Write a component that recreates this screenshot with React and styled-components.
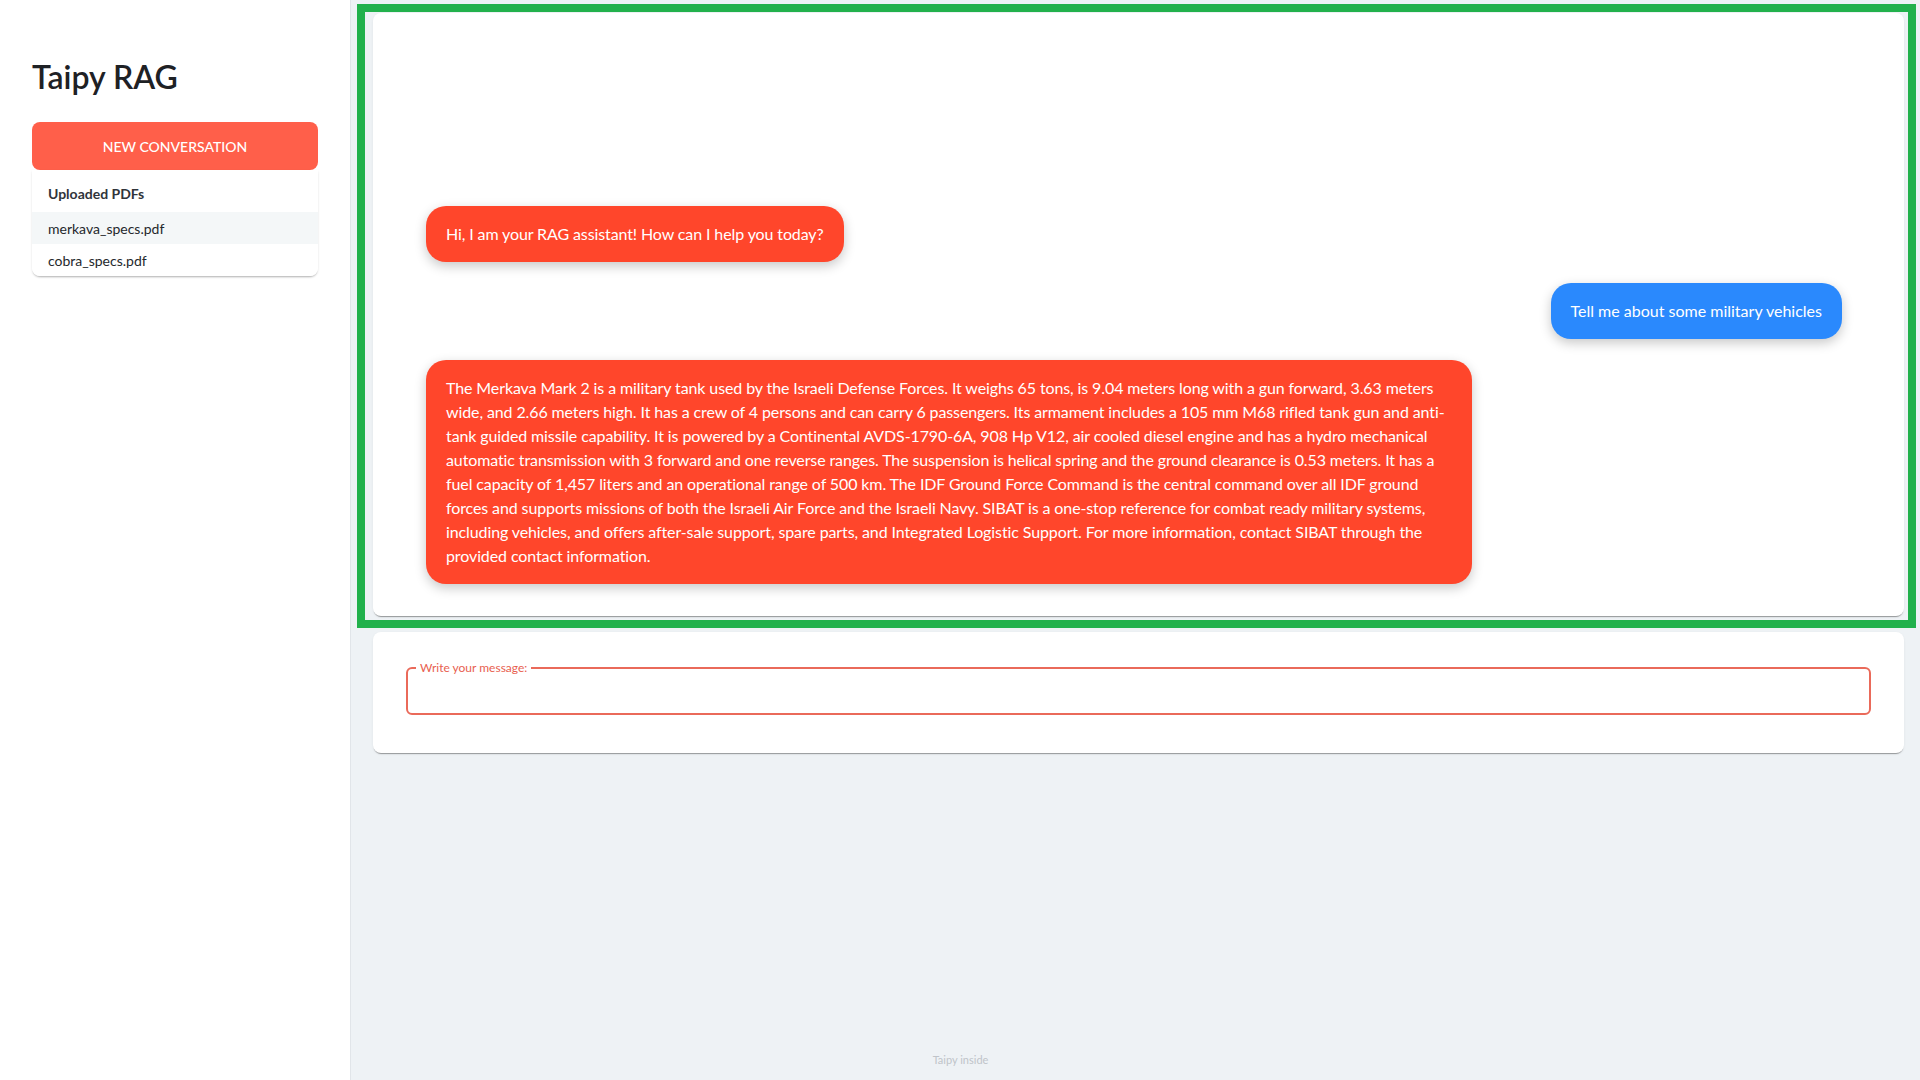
import React from "react";
import styled, { createGlobalStyle } from "styled-components";

const Global = createGlobalStyle`
  html, body { margin: 0; padding: 0; }
  body {
    font-family: Lato, "Open Sans", "Liberation Sans", sans-serif;
    background: #eef2f5;
    color: #1e2125;
  }
  * { box-sizing: border-box; }
`;

const Page = styled.div`
  display: grid;
  grid-template-columns: 351px 1fr;
  min-height: 100vh;
`;

const Sidebar = styled.aside`
  background: #ffffff;
  border-right: 1px solid #e1e5e9;
  padding: 57px 32px 0 32px;
  display: flex;
  flex-direction: column;
`;

const Title = styled.h1`
  margin: 0 0 25px 0;
  font-size: 32px;
  line-height: 40px;
  font-weight: 600;
  color: #1e2125;
  letter-spacing: 0;
`;

const PrimaryButton = styled.button`
  height: 48px;
  width: 100%;
  border: none;
  border-radius: 8px;
  background: #ff5f4a;
  color: #ffffff;
  font-family: inherit;
  font-size: 14px;
  font-weight: 500;
  text-transform: uppercase;
  letter-spacing: 0;
  cursor: pointer;
`;

const FileList = styled.div`
  background: #ffffff;
  border-radius: 0 0 8px 8px;
  box-shadow: 0 2px 2px -1px rgba(0, 0, 0, 0.25), 0 1px 3px 0 rgba(0, 0, 0, 0.08);
  overflow: hidden;
`;

const ListHeader = styled.div`
  height: 42px;
  display: flex;
  align-items: center;
  padding: 5px 16px 0 16px;
  font-size: 14px;
  font-weight: 700;
  color: #30343a;
`;

const ListRow = styled.div`
  height: 32px;
  display: flex;
  align-items: center;
  padding: 0 16px;
  font-size: 14px;
  color: #25282c;
  background: ${(p) => (p.$selected ? "#f4f7f8" : "#ffffff")};
`;

const Main = styled.main`
  display: flex;
  flex-direction: column;
  padding: 4px 4px 0 6px;
`;

const Highlight = styled.div`
  border: 8px solid #22b14c;
  padding: 1px 4px 4px 8px;
`;

const Card = styled.section`
  background: #ffffff;
  border-radius: 8px;
  box-shadow: 0 2px 1px -1px rgba(0, 0, 0, 0.35), 0 1px 3px 0 rgba(0, 0, 0, 0.06);
`;

const ChatCard = styled(Card)`
  height: 603px;
  display: flex;
  flex-direction: column;
  justify-content: flex-end;
  gap: 21px;
  padding: 0 62px 32px 53px;
`;

const Bubble = styled.div`
  align-self: ${(p) => (p.$user ? "flex-end" : "flex-start")};
  max-width: 1046px;
  background: ${(p) => (p.$user ? "#2a89fd" : "#ff462b")};
  color: #ffffff;
  font-size: 16px;
  line-height: 24px;
  letter-spacing: ${(p) => (p.$user ? "0" : "-0.11px")};
  padding: 16px 20px;
  border-radius: 20px;
  box-shadow: 0 4px 12px rgba(0, 0, 0, 0.22);
`;

const InputCard = styled(Card)`
  margin: 4px 12px 0 16px;
  padding: 29px 33px 38px 33px;
`;

const Field = styled.fieldset`
  margin: 0;
  height: 54px;
  border: 2px solid #ea6a5a;
  border-radius: 6px;
  padding: 0 8px;
`;

const Legend = styled.legend`
  margin-left: 0;
  padding: 0 4px;
  font-size: 12px;
  line-height: 14px;
  color: #e8604f;
`;

const TextInput = styled.input`
  width: 100%;
  border: none;
  outline: none;
  background: transparent;
  font-family: inherit;
  font-size: 16px;
  height: 34px;
`;

const Footer = styled.footer`
  margin-top: auto;
  padding: 0 352px 14px 0;
  text-align: center;
  font-size: 11px;
  color: #bfc4c9;
`;

const answer =
  "The Merkava Mark 2 is a military tank used by the Israeli Defense Forces. It weighs 65 tons, is 9.04 meters long with a gun forward, 3.63 meters wide, and 2.66 meters high. It has a crew of 4 persons and can carry 6 passengers. Its armament includes a 105 mm M68 rifled tank gun and anti-tank guided missile capability. It is powered by a Continental AVDS-1790-6A, 908 Hp V12, air cooled diesel engine and has a hydro mechanical automatic transmission with 3 forward and one reverse ranges. The suspension is helical spring and the ground clearance is 0.53 meters. It has a fuel capacity of 1,457 liters and an operational range of 500 km. The IDF Ground Force Command is the central command over all IDF ground forces and supports missions of both the Israeli Air Force and the Israeli Navy. SIBAT is a one-stop reference for combat ready military systems, including vehicles, and offers after-sale support, spare parts, and Integrated Logistic Support. For more information, contact SIBAT through the provided contact information.";

export default function App() {
  return (
    <>
      <Global />
      <Page>
        <Sidebar>
          <Title>Taipy RAG</Title>
          <PrimaryButton>New Conversation</PrimaryButton>
          <FileList>
            <ListHeader>Uploaded PDFs</ListHeader>
            <ListRow $selected>merkava_specs.pdf</ListRow>
            <ListRow>cobra_specs.pdf</ListRow>
          </FileList>
        </Sidebar>
        <Main>
          <Highlight>
            <ChatCard>
              <Bubble>Hi, I am your RAG assistant! How can I help you today?</Bubble>
              <Bubble $user>Tell me about some military vehicles</Bubble>
              <Bubble>{answer}</Bubble>
            </ChatCard>
          </Highlight>
          <InputCard>
            <Field>
              <Legend>Write your message:</Legend>
              <TextInput />
            </Field>
          </InputCard>
          <Footer>Taipy inside</Footer>
        </Main>
      </Page>
    </>
  );
}
